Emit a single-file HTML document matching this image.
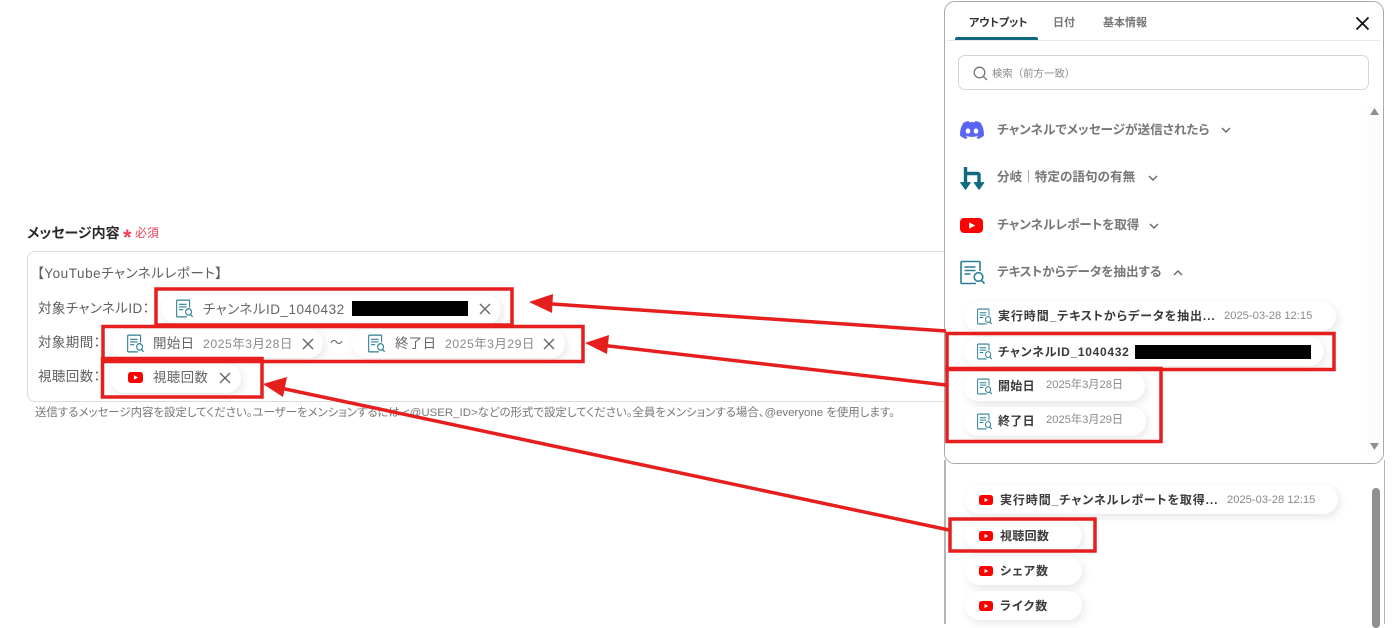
<!DOCTYPE html>
<html lang="ja">
<head>
<meta charset="utf-8">
<title>メッセージ内容</title>
<style>
html,body{margin:0;padding:0;background:#fff}
body{width:1399px;height:624px;position:relative;overflow:hidden;font-family:"Liberation Sans","Noto Sans CJK JP",sans-serif;color:#555;font-feature-settings:"palt"}
.t{position:absolute;white-space:nowrap;line-height:1}
.box{position:absolute;box-sizing:border-box}
.chip{position:absolute;box-sizing:border-box;height:29px;background:#fff;border-radius:15px;box-shadow:2px 3px 9px rgba(0,0,0,.10)}
svg{position:absolute;overflow:visible}
.b{font-weight:700;color:#3a3a3a;font-size:12px;letter-spacing:.3px}
.d{color:#8a8a8a;font-size:11.2px}
.g{color:#777;font-size:12.6px;font-weight:700}
.m{color:#5f5f5f;font-size:13.5px;letter-spacing:.4px}
.s{color:#666;font-size:13.5px;letter-spacing:.3px}
.s2{color:#8a8a8a;font-size:12.3px;letter-spacing:.5px}
</style>
</head>
<body>
<svg width="0" height="0" style="position:absolute">
<defs>
<symbol id="doc" viewBox="0 0 25 25" preserveAspectRatio="none">
<path d="M20 11V2.5a1 1 0 0 0-1-1H2a1 1 0 0 0-1 1v20a1 1 0 0 0 1 1h14" fill="none" stroke="#2a7f93" stroke-width="1.6"/>
<path d="M4.5 7h11M4.5 10.5h11M4.5 14h6" fill="none" stroke="#2a7f93" stroke-width="1.5"/>
<circle cx="18.5" cy="17" r="4.3" fill="#fff" stroke="#2a7f93" stroke-width="1.6"/>
<path d="M21.5 20.5l3 3" stroke="#2a7f93" stroke-width="1.6"/>
</symbol>
<symbol id="yt" viewBox="0 0 24 17" preserveAspectRatio="none">
<rect x="0" y="0" width="24" height="17" rx="4.5" fill="#f00"/>
<path d="M9.5 5l6.5 3.5-6.5 3.5z" fill="#fff"/>
</symbol>
</defs>
</svg>

<!-- Form -->
<div class="t" style="left:27px;top:226px;font-size:14px;font-weight:700;color:#2a2a2a">メッセージ内容</div>
<div class="t" style="left:123px;top:227px;font-size:22px;font-weight:700;color:#f0405a">*</div>
<div class="t" style="left:135px;top:227px;font-size:12px;color:#f0405a">必須</div>
<div class="box" style="left:27px;top:251px;width:930px;height:151px;border:1px solid #d8dcdf;border-radius:8px"></div>

<div class="t m" style="left:37px;top:267px;letter-spacing:.55px">【YouTubeチャンネルレポート】</div>
<div class="t m" style="left:38px;top:302px">対象チャンネルID：</div>
<div class="t m" style="left:38px;top:336px">対象期間：</div>
<div class="t m" style="left:38px;top:370px">視聴回数：</div>

<div class="chip" style="left:161px;top:295px;width:340px"></div>
<svg style="left:176px;top:299px" width="17" height="19"><use href="#doc" width="17" height="19"/></svg>
<div class="t s" style="left:203px;top:303px;letter-spacing:.5px">チャンネルID_1040432</div>
<div class="box" style="left:352px;top:301px;width:116px;height:15px;background:#000"></div>
<svg style="left:479px;top:303px" width="12" height="12"><path d="M1 1l10 10M11 1L1 11" stroke="#666" stroke-width="1.4"/></svg>

<div class="chip" style="left:110px;top:329px;width:213px"></div>
<svg style="left:127px;top:334px" width="17" height="19"><use href="#doc" width="17" height="19"/></svg>
<div class="t s" style="left:153px;top:337px">開始日</div>
<div class="t s2" style="left:203px;top:338px">2025年3月28日</div>
<svg style="left:302px;top:338px" width="12" height="12"><path d="M1 1l10 10M11 1L1 11" stroke="#666" stroke-width="1.4"/></svg>
<div class="t" style="left:330px;top:336px;font-size:13px;color:#666">～</div>
<div class="chip" style="left:352px;top:329px;width:213px"></div>
<svg style="left:368px;top:334px" width="17" height="19"><use href="#doc" width="17" height="19"/></svg>
<div class="t s" style="left:395px;top:337px">終了日</div>
<div class="t s2" style="left:445px;top:338px">2025年3月29日</div>
<svg style="left:543px;top:338px" width="12" height="12"><path d="M1 1l10 10M11 1L1 11" stroke="#666" stroke-width="1.4"/></svg>

<div class="chip" style="left:110px;top:364px;width:131px"></div>
<svg style="left:128px;top:372px" width="15" height="11"><use href="#yt" width="15" height="11"/></svg>
<div class="t s" style="left:153px;top:371px">視聴回数</div>
<svg style="left:219px;top:372px" width="12" height="12"><path d="M1 1l10 10M11 1L1 11" stroke="#666" stroke-width="1.4"/></svg>

<div class="t" style="left:35px;top:408px;font-size:11.45px;color:#777">送信するメッセージ内容を設定してください。ユーザーをメンションするには &lt;@USER_ID&gt;などの形式で設定してください。全員をメンションする場合、@everyone を使用します。</div>

<!-- Lower panel behind -->
<div class="box" style="left:944px;top:460px;width:2px;height:164px;background:#b5b5b5"></div>
<div class="box" style="left:1384px;top:460px;width:1px;height:164px;background:#b5b5b5"></div>
<div class="box" style="left:1372px;top:488px;width:8px;height:140px;background:#8f8f8f;border-radius:4px"></div>

<div class="chip" style="left:965px;top:485px;width:373px"></div>
<svg style="left:979px;top:495px" width="14" height="10"><use href="#yt" width="14" height="10"/></svg>
<div class="t b" style="left:1000px;top:494px;letter-spacing:.9px">実行時間_チャンネルレポートを取得...</div>
<div class="t d" style="left:1227px;top:495px">2025-03-28 12:15</div>
<div class="chip" style="left:965px;top:521px;width:117px"></div>
<svg style="left:979px;top:531px" width="14" height="10"><use href="#yt" width="14" height="10"/></svg>
<div class="t b" style="left:1000px;top:530px">視聴回数</div>
<div class="chip" style="left:965px;top:556px;width:117px"></div>
<svg style="left:979px;top:566px" width="14" height="10"><use href="#yt" width="14" height="10"/></svg>
<div class="t b" style="left:1000px;top:565px;letter-spacing:1px">シェア数</div>
<div class="chip" style="left:965px;top:591px;width:117px"></div>
<svg style="left:979px;top:601px" width="14" height="10"><use href="#yt" width="14" height="10"/></svg>
<div class="t b" style="left:1000px;top:600px;letter-spacing:1px">ライク数</div>

<!-- Main panel -->
<div class="box" style="left:944px;top:1px;width:440px;height:463px;background:#fff;border:1.5px solid #a9a9a9;border-radius:11px"></div>
<div class="t" style="left:969px;top:18px;font-size:11px;font-weight:700;color:#333">アウトプット</div>
<div class="t" style="left:1053px;top:18px;font-size:11px;color:#777;font-weight:700">日付</div>
<div class="t" style="left:1103px;top:18px;font-size:11px;color:#777;font-weight:700">基本情報</div>
<div class="box" style="left:947px;top:40px;width:433px;height:1px;background:#e6e8e9"></div>
<div class="box" style="left:955px;top:37px;width:83px;height:3px;background:#0f6a80;border-radius:2px 2px 0 0"></div>
<svg style="left:1356px;top:17px" width="13" height="13"><path d="M.5.5l12 12M12.5.5l-12 12" stroke="#111" stroke-width="1.8"/></svg>

<div class="box" style="left:958px;top:55px;width:411px;height:35px;border:1px solid #d3d6d8;border-radius:7px"></div>
<svg style="left:973px;top:66px" width="15" height="15"><circle cx="6.5" cy="6.5" r="5.3" fill="none" stroke="#777" stroke-width="1.3"/><path d="M10.5 10.5l3.5 3.5" stroke="#777" stroke-width="1.3"/></svg>
<div class="t" style="left:992px;top:70px;font-size:10.4px;color:#8a8a8a;font-feature-settings:normal">検索（前方一致）</div>

<div class="box" style="left:1367px;top:105px;width:13px;height:350px;background:#fcfcfc"></div>
<svg style="left:1369px;top:107px" width="11" height="9"><path d="M5.5 1L10 8H1z" fill="#8f8f8f"/></svg>
<svg style="left:1369px;top:442px" width="11" height="9"><path d="M5.5 8L10 1H1z" fill="#8f8f8f"/></svg>

<!-- Discord -->
<svg style="left:960px;top:121px" width="24" height="18" viewBox="0 0 24 18"><path d="M20.3 1.5A19.6 19.6 0 0 0 15.4 0l-.7 1.3a18 18 0 0 0-5.4 0L8.6 0a19.7 19.7 0 0 0-4.9 1.5C.6 6.1-.3 10.6.2 15a20 20 0 0 0 6 3l1.3-2a12.5 12.5 0 0 1-2-1l.5-.4a14 14 0 0 0 12 0l.5.4a12.5 12.5 0 0 1-2 1l1.3 2a20 20 0 0 0 6-3c.5-5.1-.8-9.5-3.5-13.5z" fill="#5865f2"/><ellipse cx="8" cy="10" rx="2.3" ry="2.6" fill="#fff"/><ellipse cx="16" cy="10" rx="2.3" ry="2.6" fill="#fff"/></svg>
<div class="t g" style="left:997px;top:124px">チャンネルでメッセージが送信されたら</div>
<svg style="left:1221px;top:127px" width="10" height="7"><path d="M1 1l4 4 4-4" fill="none" stroke="#666" stroke-width="1.4"/></svg>

<!-- Branch -->
<svg style="left:960px;top:166px" width="24" height="24" viewBox="0 0 24 24"><path d="M5.5 1v17M5.5 7.5h12.5a1 1 0 0 1 1 1V18" fill="none" stroke="#0f6a80" stroke-width="3.4"/><path d="M.5 16.5h10L5.5 23.5zM14 16.5h10l-5 7z" fill="#0f6a80" stroke="#0f6a80" stroke-width=".8" stroke-linejoin="round"/></svg>
<div class="t g" style="left:997px;top:171px">分岐｜特定の語句の有無</div>
<svg style="left:1148px;top:175px" width="10" height="7"><path d="M1 1l4 4 4-4" fill="none" stroke="#666" stroke-width="1.4"/></svg>

<!-- YouTube -->
<svg style="left:960px;top:218px" width="23" height="15"><use href="#yt" width="23" height="15"/></svg>
<div class="t g" style="left:997px;top:219px">チャンネルレポートを取得</div>
<svg style="left:1149px;top:223px" width="10" height="7"><path d="M1 1l4 4 4-4" fill="none" stroke="#666" stroke-width="1.4"/></svg>

<!-- Text extract -->
<svg style="left:960px;top:260px" width="25" height="25"><use href="#doc" width="25" height="25"/></svg>
<div class="t g" style="left:997px;top:266px">テキストからデータを抽出する</div>
<svg style="left:1173px;top:269px" width="10" height="7"><path d="M1 6l4-4 4 4" fill="none" stroke="#666" stroke-width="1.4"/></svg>

<div class="chip" style="left:964px;top:302px;width:372px"></div>
<svg style="left:977px;top:308px" width="15" height="17"><use href="#doc" width="15" height="17"/></svg>
<div class="t b" style="left:998px;top:310px;letter-spacing:.9px">実行時間_テキストからデータを抽出...</div>
<div class="t d" style="left:1224px;top:311px">2025-03-28 12:15</div>

<div class="chip" style="left:964px;top:337px;width:360px"></div>
<svg style="left:977px;top:343px" width="15" height="17"><use href="#doc" width="15" height="17"/></svg>
<div class="t b" style="left:998px;top:346px;letter-spacing:.7px">チャンネルID_1040432</div>
<div class="box" style="left:1135px;top:345px;width:176px;height:14px;background:#000"></div>

<div class="chip" style="left:964px;top:372px;width:181px"></div>
<svg style="left:977px;top:378px" width="15" height="17"><use href="#doc" width="15" height="17"/></svg>
<div class="t b" style="left:998px;top:380px">開始日</div>
<div class="t d" style="left:1046px;top:380px">2025年3月28日</div>

<div class="chip" style="left:964px;top:407px;width:182px"></div>
<svg style="left:977px;top:413px" width="15" height="17"><use href="#doc" width="15" height="17"/></svg>
<div class="t b" style="left:998px;top:415px">終了日</div>
<div class="t d" style="left:1046px;top:415px">2025年3月29日</div>

<!-- Annotations -->
<svg style="left:0;top:0" width="1399" height="624" viewBox="0 0 1399 624">
<g fill="none" stroke="#e61e1e" stroke-width="3.5">
<rect x="156" y="289" width="356" height="36"/>
<rect x="103" y="326.5" width="480" height="35"/>
<rect x="102.5" y="358.5" width="159.5" height="38.5"/>
<rect x="947" y="333.5" width="387" height="36"/>
<rect x="947" y="368.5" width="214" height="73"/>
<rect x="950" y="519" width="145" height="32"/>
<path d="M946 331L545 303.5M946 385L600 345M949 530L278 387.5"/>
</g>
<path d="M529 302L553 294L552 313zM585 343L609 335L607 354zM263 384L287 377L283 397z" fill="#e61e1e"/>
</svg>
</body>
</html>
